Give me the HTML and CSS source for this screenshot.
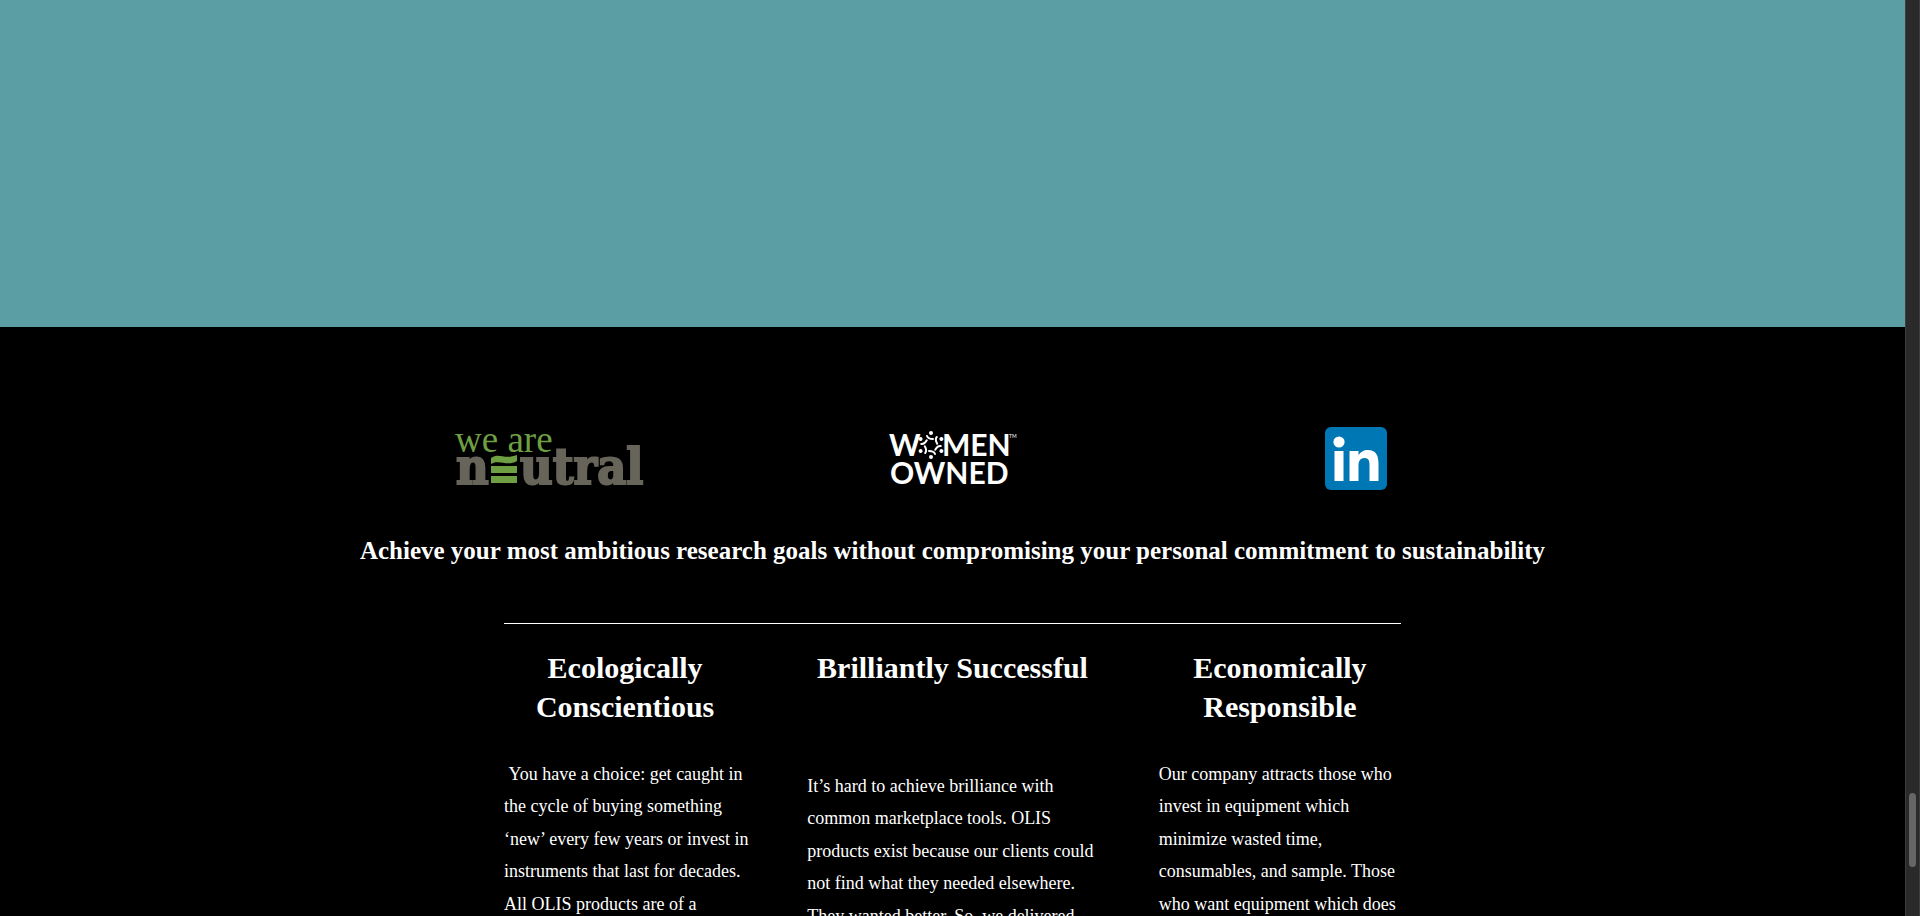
FILE: index.html
```html
<!DOCTYPE html>
<html lang="en">
<head>
<meta charset="utf-8">
<title>OLIS</title>
<link rel="stylesheet" href="styles.css">
</head>
<body>
<div class="page">
  <section class="banner"></section>
  <footer class="footer">
    <div class="logos">
      <a class="logo" href="#" aria-label="We are neutral">
        <svg width="192" height="60" viewBox="0 0 192 60">
          <text class="we-are" x="2" y="23">we are</text>
          <text class="neutral" x="3" y="55">n</text>
          <path class="leaf" d="M38 29c8-6 13 2 26-3v6c-10 6-17-2-26 3zM38 37h26v7H38zM38 47h26v7H38z"/>
          <text class="neutral" x="67" y="55">utral</text>
        </svg>
      </a>
      <a class="logo" href="#" aria-label="Women owned">
        <svg width="132" height="60" viewBox="0 0 132 60">
          <text class="owned" x="3" y="27">W</text>
          <g transform="translate(45 16)">
            <g id="figure"><circle class="white" cx="0" cy="-12" r="2"/><path class="arm" d="M-4-9Q-3-6 2-6"/></g>
            <use href="#figure" transform="rotate(60)"/>
            <use href="#figure" transform="rotate(120)"/>
            <use href="#figure" transform="rotate(180)"/>
            <use href="#figure" transform="rotate(240)"/>
            <use href="#figure" transform="rotate(300)"/>
          </g>
          <text class="owned" x="56" y="27">MEN</text>
          <text class="owned" x="4" y="55">OWNED</text>
          <text class="tm" x="123" y="9">TM</text>
        </svg>
      </a>
      <a class="logo" href="#" aria-label="LinkedIn">
        <svg width="62" height="63" viewBox="0 0 62 63">
          <rect class="blue" width="62" height="63" rx="6"/>
          <circle class="white" cx="14" cy="15" r="5.6"/>
          <path class="white" d="M9.500 24h9v30h-9zM24.500 24h9v4c2-3 5-5 9-5 9 0 11 6 11 14v17h-9V39c0-4 0-8-5-8s-6 4-6 8v15h-9z"/>
        </svg>
      </a>
    </div>
    <h2 class="tagline">Achieve your most ambitious research goals without compromising your personal commitment to sustainability</h2>
    <div class="values">
      <article class="value">
        <h3>Ecologically<br>Conscientious</h3>
        <p>&nbsp;You have a choice: get caught in<br>the cycle of buying something<br>‘new’ every few years or invest in<br>instruments that last for decades.<br>All OLIS products are of a</p>
      </article>
      <article class="value value-middle">
        <h3>Brilliantly Successful</h3>
        <p>It’s hard to achieve brilliance with<br>common marketplace tools. OLIS<br>products exist because our clients could<br>not find what they needed elsewhere.<br>They wanted better. So, we delivered</p>
      </article>
      <article class="value">
        <h3>Economically<br>Responsible</h3>
        <p>Our company attracts those who<br>invest in equipment which<br>minimize wasted time,<br>consumables, and sample. Those<br>who want equipment which does</p>
      </article>
    </div>
  </footer>
</div>
<div class="scrollbar"><div class="thumb"></div></div>
</body>
</html>
```
FILE: styles.css
```css
* { box-sizing: border-box; }
body {
  margin: 0;
  height: 100vh;
  display: flex;
  overflow: hidden;
  background: #000;
  color: #fff;
  font-family: "Liberation Serif", "Times New Roman", serif;
}
.page { flex: 1; min-width: 0; overflow: hidden; }
.banner { background: #5b9fa4; min-height: 327px; }
.footer { padding: 100px 24px 0; }
.logos {
  display: grid;
  grid-template-columns: repeat(3, 1fr);
  max-width: 1210px;
  margin: 0 auto;
  justify-items: center;
  align-items: center;
}
.logo, .logo svg { display: block; overflow: visible; }
.we-are { font-size: 37px; fill: #6f9f43; }
.neutral {
  font-family: "DejaVu Serif Condensed", "DejaVu Serif", serif;
  font-size: 50px;
  font-weight: 700;
  fill: #67645a;
  stroke: #67645a;
  stroke-width: 2;
}
.leaf { fill: #6f9f43; }
.owned { font-family: Lato, sans-serif; font-size: 30px; font-weight: 700; fill: #fff; }
.tm { font-family: Lato, sans-serif; font-size: 5px; fill: #fff; }
.white { fill: #fff; }
.blue { fill: #0077b5; }
.arm { fill: none; stroke: #fff; stroke-width: 2; stroke-linecap: round; }
.tagline {
  margin: 40px 0 0;
  font-size: 25px;
  line-height: 42px;
  text-align: center;
}
.values {
  display: grid;
  grid-template-columns: minmax(0, 5fr) minmax(0, 6fr) minmax(0, 5fr);
  column-gap: 61px;
  max-width: 897px;
  margin: 51px auto 0;
  padding-top: 24px;
  border-top: 1px solid #fff;
}
.value h3 {
  margin: 0;
  min-height: 78px;
  font-size: 30px;
  line-height: 39px;
  text-align: center;
}
.value p {
  margin: 32px 0 0;
  font-size: 18px;
  line-height: 1.8;
  white-space: nowrap;
}
.value-middle p { margin-top: 44px; }
.scrollbar {
  width: 15px;
  background: #2a2a2a;
  border: solid #3d3d3d;
  border-width: 0 1px;
  padding: 0 3px;
  display: grid;
  grid-template-rows: 793fr 74fr 49fr;
}
.thumb { grid-row: 2; border-radius: 4px; background: #666; }
```
